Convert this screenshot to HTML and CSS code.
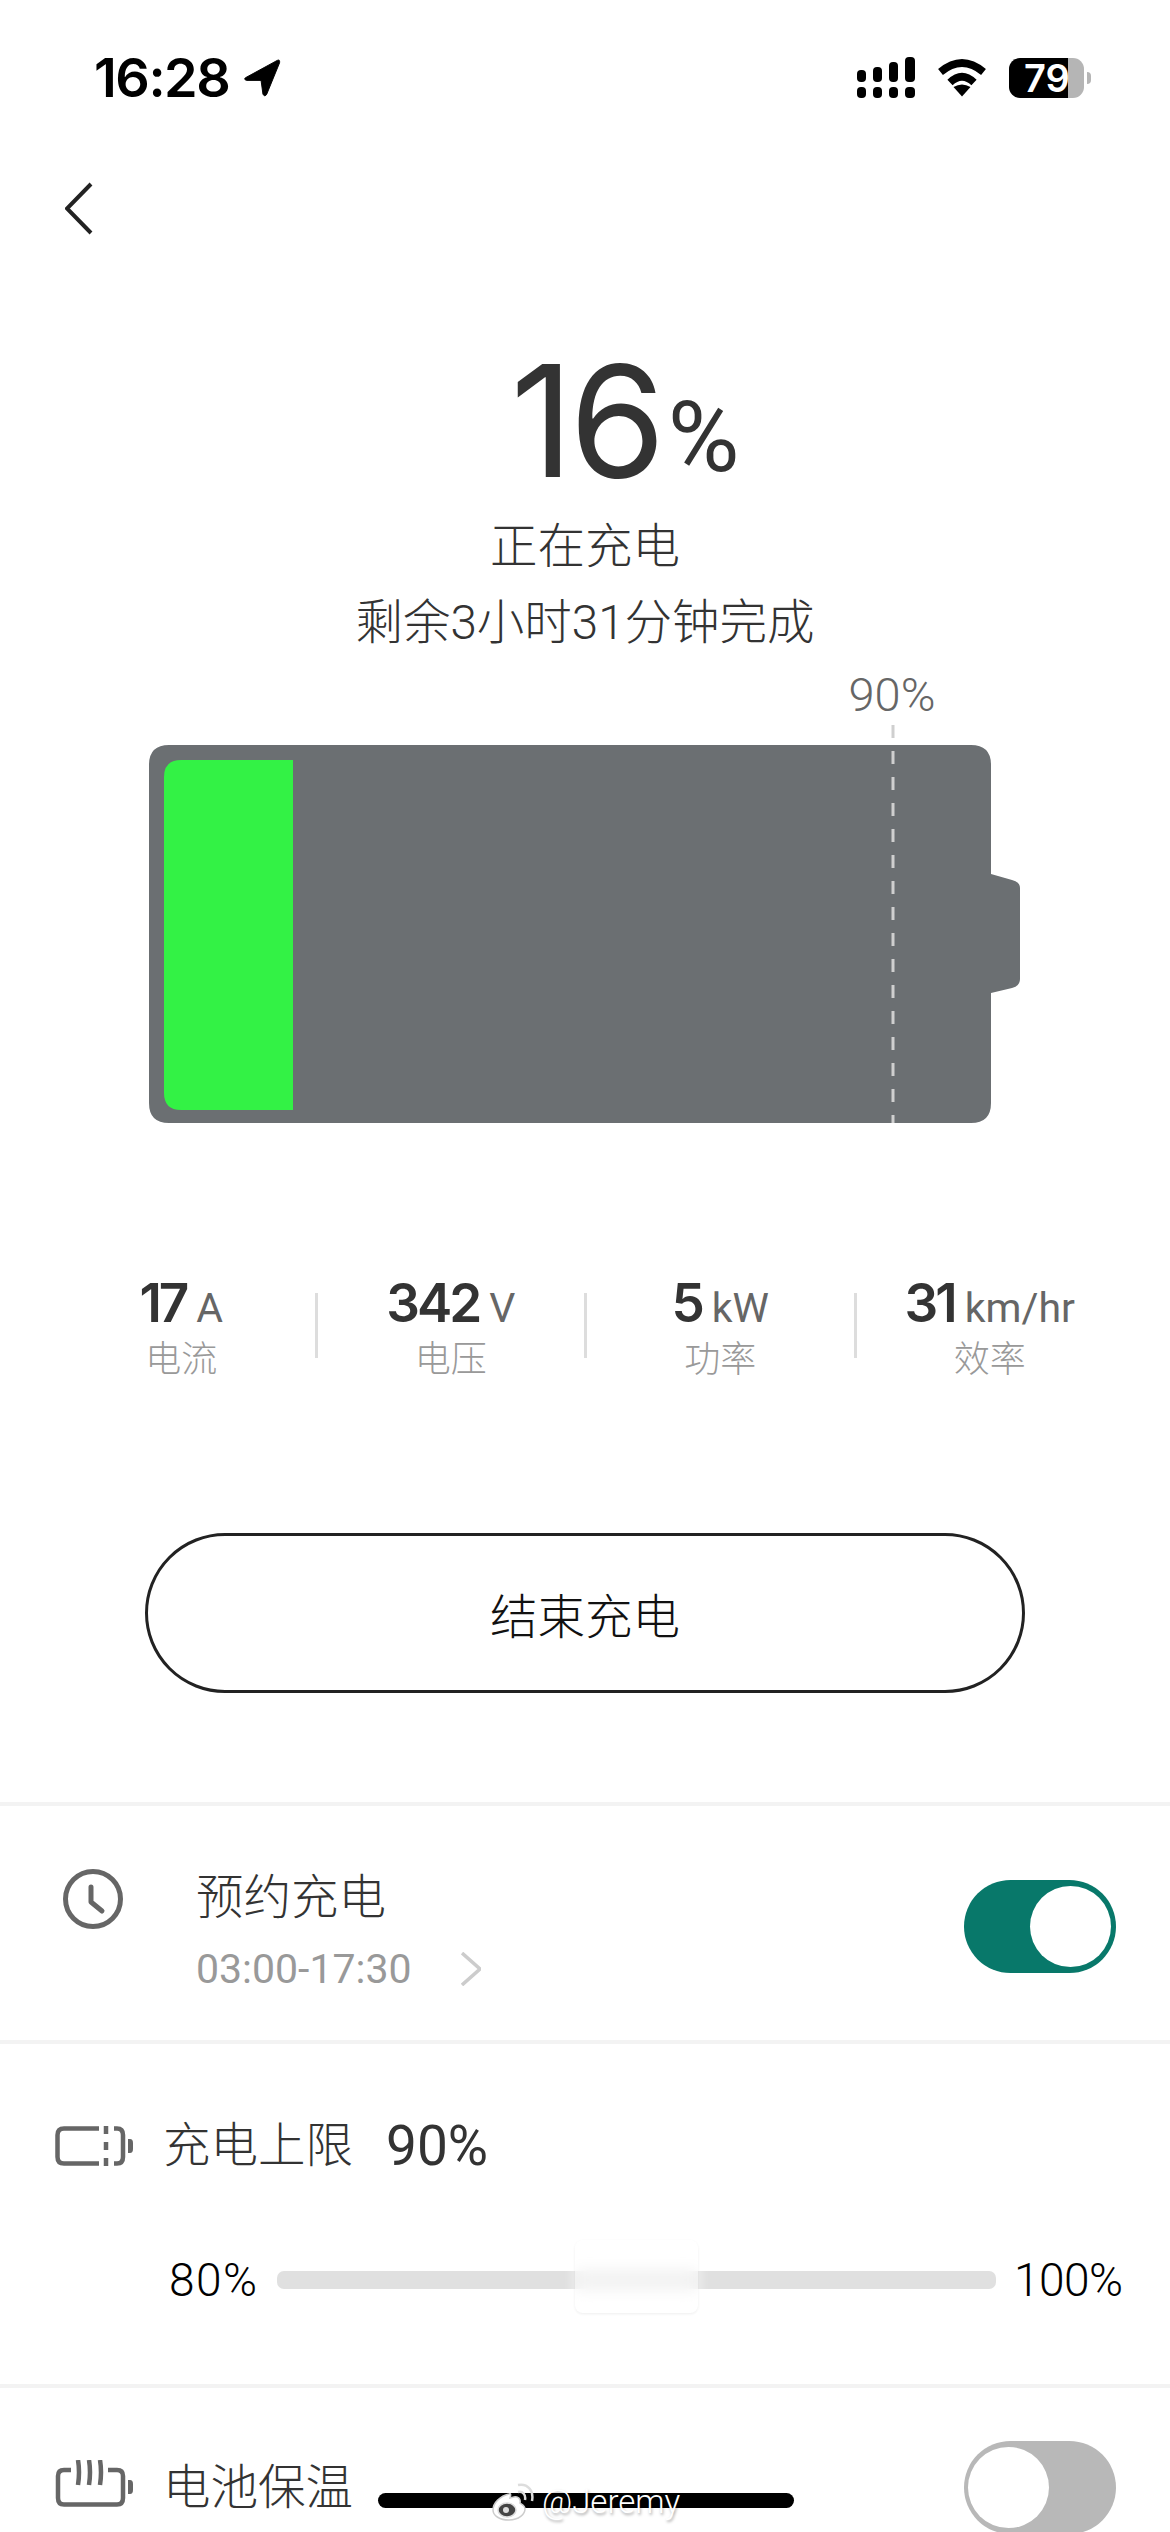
FILE: index.html
```html
<!DOCTYPE html>
<html lang="zh">
<head>
<meta charset="utf-8">
<title>充电</title>
<link rel="stylesheet" href="styles.css">
</head>
<body>
<div class="page">
  <header class="status">
    <div class="status-left">
      <span class="time">16:28</span>
      <svg class="loc" width="38" height="40" viewBox="0 0 40 40"><path d="M36 1.500 3 19.500Q0 21.500 4 22.500L19 22.500 21 37Q23 40.500 25 37L38.500 4Q39 0 36 1.500Z"/></svg>
    </div>
    <div class="status-right">
      <svg class="signal" width="58" height="42" viewBox="0 0 58 42"><rect x="0" y="13" width="9" height="12" rx="4"/><rect x="16" y="10" width="9" height="15" rx="4"/><rect x="32" y="5" width="9" height="20" rx="4"/><rect x="48" y="0" width="10" height="25" rx="4"/><rect x="0" y="30" width="9" height="11" rx="4"/><rect x="16" y="30" width="9" height="11" rx="4"/><rect x="32" y="30" width="9" height="11" rx="4"/><rect x="48" y="30" width="10" height="11" rx="4"/></svg>
      <svg class="wifi" width="50" height="38" viewBox="0 0 50 38"><path class="wifi-arc" d="M3.500 13Q25-5 46.500 13M13 23.500Q25 12 37 23.500"/><path d="M25 37.500 16.500 28Q25 23 33.500 28Z"/></svg>
      <div class="bat">
        <div class="bat-body"><span class="bat-level">79</span></div>
        <span class="bat-nub"></span>
      </div>
    </div>
  </header>

  <nav class="nav">
    <svg width="28" height="53" viewBox="0 0 28 53"><path class="back" d="M26 2 2 26.500 26 51"/></svg>
  </nav>

  <section class="hero">
    <div class="soc"><span class="soc-num">16</span><span class="soc-pct">%</span></div>
    <div class="hero-line">正在充电</div>
    <div class="hero-line">剩余3小时31分钟完成</div>
  </section>

  <div class="limit-label">90%</div>
  <svg class="battery" width="873" height="399" viewBox="0 0 873 399">
    <path class="bat-shell" d="M21 20H823Q843 20 843 40V149L864 155Q872 157 872 163V254Q872 261 864 263L843 268V378Q843 398 823 398H21Q1 398 1 378V40Q1 20 21 20Z"/>
    <path class="bat-fill" d="M33 35H145V385H33Q16 385 16 368V52Q16 35 33 35Z"/>
    <line class="bat-limit" x1="745" y1="0" x2="745" y2="398"/>
  </svg>

  <section class="stats">
    <div class="stat"><div class="stat-value"><b>17</b><span>A</span></div><div class="stat-label">电流</div></div>
    <i class="stat-sep"></i>
    <div class="stat"><div class="stat-value"><b>342</b><span>V</span></div><div class="stat-label">电压</div></div>
    <i class="stat-sep"></i>
    <div class="stat"><div class="stat-value"><b>5</b><span>kW</span></div><div class="stat-label">功率</div></div>
    <i class="stat-sep"></i>
    <div class="stat"><div class="stat-value"><b>31</b><span>km/hr</span></div><div class="stat-label">效率</div></div>
  </section>

  <button class="stop">结束充电</button>

  <section class="row schedule">
    <svg class="clock" width="60" height="60" viewBox="0 0 60 60"><circle cx="30" cy="30" r="27.500"/><path d="M28 18V33L39 42"/></svg>
    <div class="schedule-text">
      <div class="row-title">预约充电</div>
      <div class="schedule-time"><span>03:00-17:30</span><svg width="20" height="34" viewBox="0 0 20 34"><path d="M1 1 19 17 1 33"/></svg></div>
    </div>
    <div class="toggle on"><span class="knob"></span></div>
  </section>

  <section class="limit">
    <div class="limit-head">
      <svg class="ico" width="78" height="40" viewBox="0 0 78 40"><path d="M44 2.500H9Q2.500 2.500 2.500 9V31Q2.500 37.500 9 37.500H44M59 2.500H62Q68 2.500 68 9V31Q68 37.500 62 37.500H59M51 0V8M51 16V24M51 32V40"/><path class="ico-nub" d="M73 13H75Q78 13 78 17V23Q78 27 75 27H73Z"/></svg>
      <span class="row-title">充电上限</span>
      <span class="limit-value">90%</span>
    </div>
    <div class="slider">
      <span class="slider-end">80%</span>
      <div class="track"><span class="thumb"></span></div>
      <span class="slider-end">100%</span>
    </div>
  </section>

  <section class="row heat">
    <svg class="ico" width="78" height="47" viewBox="0 0 78 47"><path d="M16 10H9Q3 10 3 16V38Q3 44.500 9 44.500H62Q68 44.500 68 38V16Q68 10 62 10H53M23 0Q25 12 23 25M34 0Q36 12 34 25M45 0Q47 12 45 25"/><path class="ico-nub" d="M73 20H75Q78 20 78 24V30Q78 34 75 34H73Z"/></svg>
    <span class="row-title">电池保温</span>
    <div class="toggle off"><span class="knob"></span></div>
  </section>

  <div class="home-bar"></div>
  <div class="watermark">
    <svg width="42" height="38" viewBox="0 0 42 38"><path class="wb-body" d="M17 11C8 13 1 20 1 27 1 33 8 37 17 37 27 37 33 31 33 26 33 22 29 21 28 20 29 16 26 13 22 14L18 15C19 12 19 10 17 11Z"/><ellipse class="wb-eye" cx="15" cy="27" rx="9" ry="7"/><circle class="wb-pupil" cx="14" cy="27" r="3"/><path class="wb-wave" d="M26 9C31 8 34 12 33 17M26 2C36 0 42 8 40 18"/></svg>
    <span>@Jeremy</span>
  </div>
</div>
</body>
</html>
```

FILE: styles.css
```css
* { box-sizing: border-box; }
html, body { margin: 0; padding: 0; background: #fff; }
body { font-family: "Roboto", "Noto Sans CJK SC", sans-serif; color: #333; }
.page { position: relative; width: 1170px; height: 2532px; overflow: hidden; background: #fff; }

.status { height: 156px; display: flex; justify-content: space-between; align-items: center; padding: 0 79px 0 94px; }
.status-left { display: flex; align-items: center; gap: 14px; }
.time { font-family: "Inter", sans-serif; font-weight: 600; font-size: 54px; line-height: 60px; color: #000; letter-spacing: -1.500px; }
.loc { fill: #000; stroke: #000; stroke-width: 1; display: block; }
.status-right { display: flex; align-items: center; gap: 22px; }
.signal { fill: #000; display: block; }
.wifi { fill: #000; display: block; }
.wifi-arc { fill: none; stroke: #000; stroke-width: 7.500; }
.bat { display: flex; align-items: center; gap: 3px; }
.bat-body { width: 75px; height: 40px; border-radius: 11px; background: linear-gradient(90deg, #000 0 59px, #b5b5b5 59px); display: flex; align-items: center; padding-left: 15px; }
.bat-level { font-family: "Inter", sans-serif; font-weight: 600; font-size: 38px; line-height: 40px; color: #fff; }
.bat-nub { width: 4px; height: 12px; background: #b5b5b5; border-radius: 0 6px 6px 0; }

.nav { height: 102px; padding: 26px 0 0 65px; }
.nav svg { display: block; }
.back { fill: none; stroke: #222; stroke-width: 4; }

.hero { display: flex; flex-direction: column; align-items: center; }
.soc { display: flex; justify-content: center; align-items: baseline; padding: 98px 0 0 80px; margin-bottom: 0; line-height: 130px; }
.soc-num { font-family: "Inter", sans-serif; font-size: 155px; font-weight: 400; color: #333; letter-spacing: -4px; }
.soc-pct { font-size: 98px; color: #333; margin-left: 6px; transform: translateY(-6px); }
.hero-line { font-size: 47.500px; line-height: 76px; color: #333; font-weight: 300; height: 76px; }

.limit-label { width: 100px; margin: 9px 0 0 842px; font-size: 47px; line-height: 50px; color: #666; text-align: center; font-weight: 300; }
.battery { display: block; margin: 5px 0 0 148px; }
.bat-shell { fill: #6b6f72; }
.bat-fill { fill: #33f245; }
.bat-limit { stroke: #cfcfcf; stroke-width: 3; stroke-dasharray: 13 13; }

.stats { display: flex; align-items: center; margin-top: 150px; padding-left: 48px; }
.stat { width: 266.500px; display: flex; flex-direction: column; align-items: center; }
.stat-sep { width: 3px; height: 65px; background: #ddd; display: block; margin-top: -7px; }
.stat-value { display: flex; align-items: baseline; gap: 10px; height: 58px; line-height: 58px; margin-bottom: 5px; }
.stat-value b { font-family: "Inter", sans-serif; font-size: 53px; font-weight: 600; letter-spacing: -3px; color: #333; }
.stat-value span { font-size: 41px; color: #666; }
.stat-label { font-size: 36px; line-height: 46px; color: #999; font-weight: 300; }

.stop { display: block; width: 880px; height: 160px; margin: 150px 0 0 145px; border: 3px solid #222; border-radius: 80px; background: #fff; font-family: "Noto Sans CJK SC", sans-serif; font-size: 47.500px; font-weight: 300; color: #111; }

.row { display: flex; border-top: 4px solid #f3f3f3; }
.schedule { margin-top: 109px; height: 238px; padding: 0 54px 0 63px; }
.clock { fill: none; stroke: #666; stroke-width: 5; stroke-linecap: round; stroke-linejoin: round; display: block; margin-top: 63px; flex: none; }
.schedule-text { margin: 62px 0 0 73px; flex: 1; }
.row-title { font-size: 47.500px; line-height: 60px; color: #333; font-weight: 300; }
.schedule-time { display: flex; align-items: center; gap: 49px; margin-top: 16px; font-size: 41px; line-height: 50px; color: #999; }
.schedule-time svg { fill: none; stroke: #ccc; stroke-width: 3.500; display: block; }
.toggle { width: 152px; height: 93px; border-radius: 47px; position: relative; flex: none; }
.schedule .toggle { margin-top: 74px; }
.toggle.on { background: #08786a; }
.toggle.off { background: #b8b8b8; }
.knob { position: absolute; top: 6px; width: 81px; height: 81px; border-radius: 50%; background: #fff; }
.on .knob { right: 5px; }
.off .knob { left: 4px; }

.limit { height: 344px; border-top: 4px solid #f3f3f3; }
.limit-head { display: flex; align-items: center; padding: 60px 0 0 55px; height: 144px; }
.limit-head .row-title { margin-left: 30px; }
.ico { fill: none; stroke: #666; stroke-width: 4.500; display: block; flex: none; }
.ico-nub { fill: #666; stroke: none; }
.limit-value { font-size: 55px; font-weight: 400; color: #333; margin-left: 33px; }
.slider { display: flex; align-items: center; padding: 62px 0 0 169px; }
.slider-end { font-size: 46px; line-height: 60px; color: #000; font-weight: 300; width: 108px; flex: none; }
.slider-end:first-child { letter-spacing: 1.500px; }
.slider-end:last-child { margin-left: 18px; letter-spacing: -0.500px; }
.track { width: 719px; height: 18px; border-radius: 7px; background: #e0e0e0; position: relative; flex: none; }
.thumb { position: absolute; left: 298px; top: -31px; width: 123px; height: 73px; border-radius: 8px; background: rgba(255,255,255,.5); backdrop-filter: blur(8px); box-shadow: 0 0 10px 3px rgba(255,255,255,.45), 0 1px 3px rgba(0,0,0,.1); }

.heat { height: 160px; padding: 0 54px 0 55px; }
.heat .ico { margin-top: 72px; }
.heat .row-title { margin-left: 30px; margin-top: 70px; }
.heat .toggle { margin-left: auto; margin-top: 53px; }

.home-bar { position: absolute; left: 378px; top: 2493px; width: 416px; height: 15px; border-radius: 8px; background: #000; }
.watermark { position: absolute; left: 492px; top: 2480px; display: flex; align-items: center; gap: 8px; font-weight: 300; font-size: 33px; line-height: 44px; color: #fff; text-shadow: 1px 2px 3px rgba(0,0,0,.35); }
.wb-body { fill: #fff; stroke: #ccc; stroke-width: 1.500; }
.wb-eye { fill: #444; stroke: #ddd; stroke-width: 1.500; }
.wb-pupil { fill: #ddd; }
.wb-wave { fill: none; stroke: #ddd; stroke-width: 2.500; }
```
